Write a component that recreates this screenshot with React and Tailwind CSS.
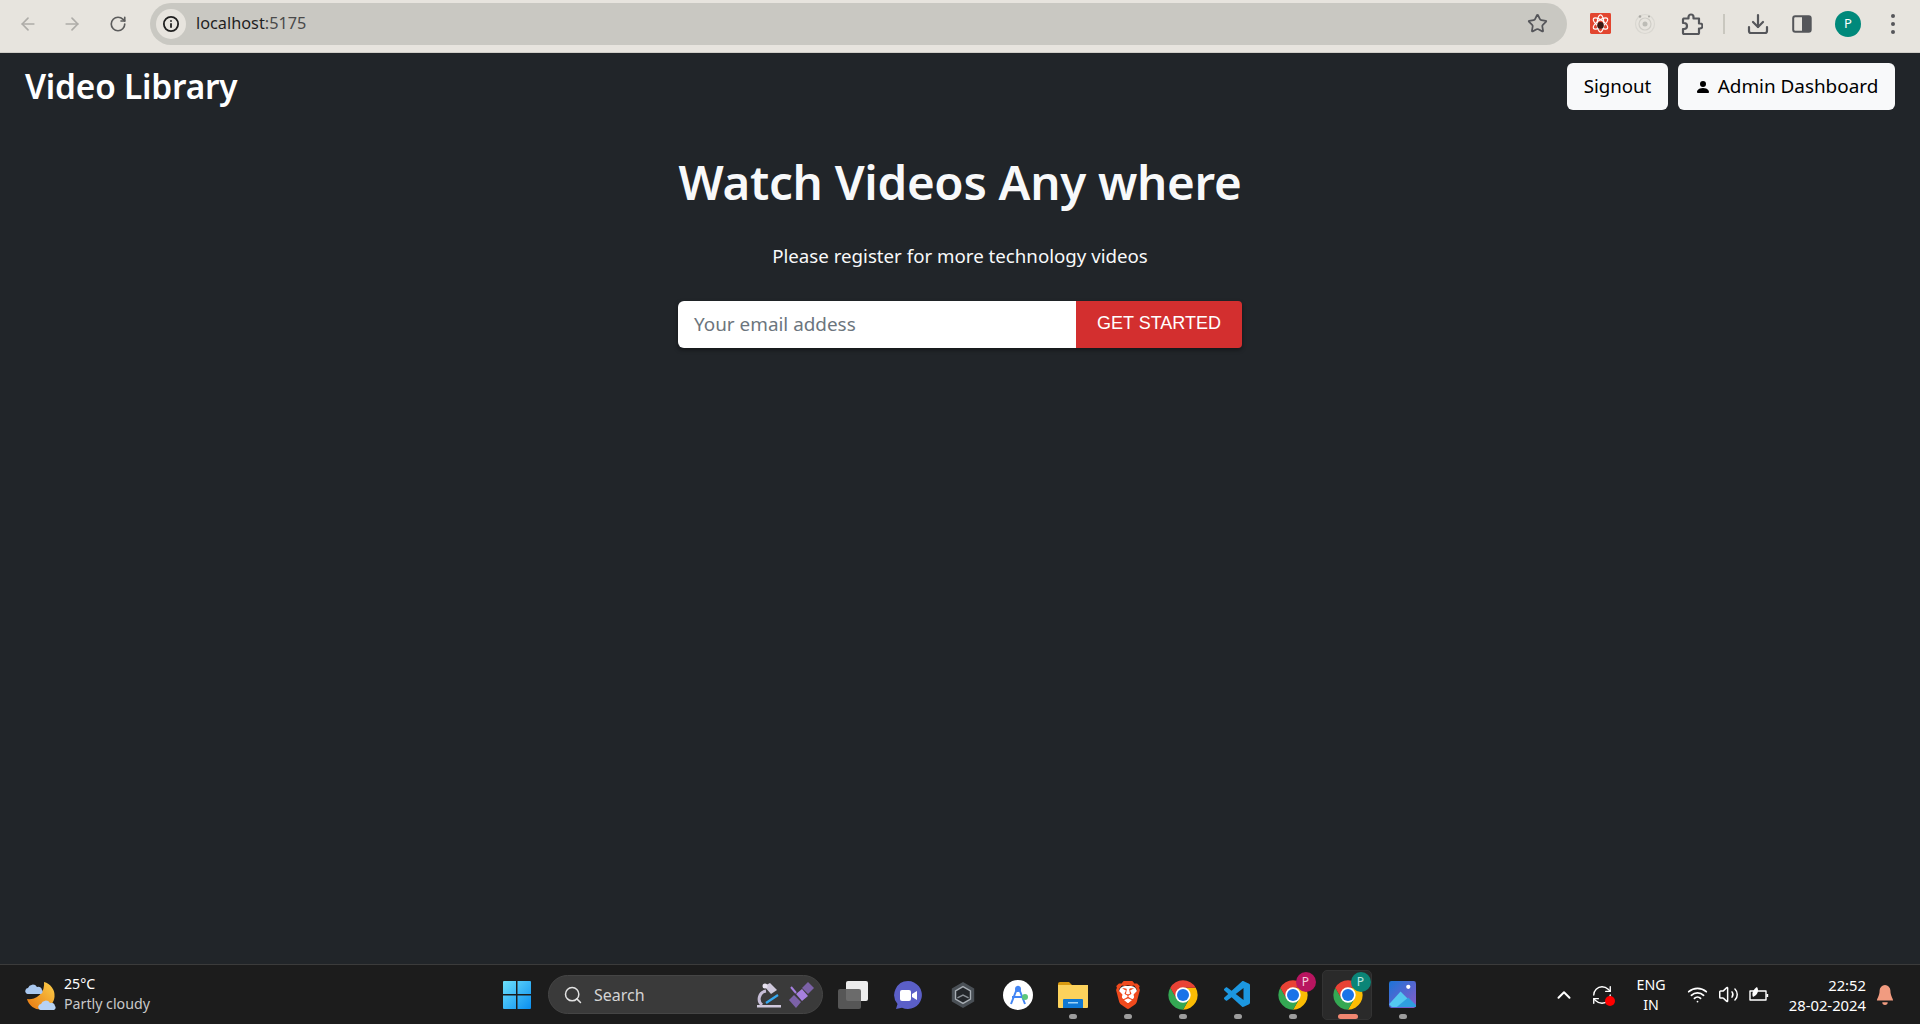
import React from "react";
import { ArrowLeft, ArrowRight, RotateCw, Star, Download, ChevronUp, Wifi, Volume2, Search, RefreshCw } from "lucide-react";
import { SiBrave } from "react-icons/si";
import { VscVscode } from "react-icons/vsc";

const seg = { fontFamily: '"Noto Sans", sans-serif' };

function Chrome({ badge, badgeClass }) {
  return (
    <div className="relative w-[32px] h-[32px]">
      <svg viewBox="0 0 48 48" className="w-[32px] h-[32px]">
        <path d="M43.05 13A22 22 0 0 1 24 46L33.5 29.5L24 13Z" fill="#fbbc04" />
        <path d="M4.95 13A22 22 0 0 0 24 46L33.5 29.5H14.5Z" fill="#34a853" />
        <path d="M4.95 13A22 22 0 0 1 43.05 13H24L14.5 29.5Z" fill="#e94235" />
        <circle cx="24" cy="24" r="11.5" fill="#fff" />
        <circle cx="24" cy="24" r="9" fill="#1a73e8" />
      </svg>
      {badge && (
        <div className={`absolute -top-[7px] -right-[7px] w-[20px] h-[20px] rounded-full flex items-center justify-center text-[12px] ${badgeClass}`}>
          P
        </div>
      )}
    </div>
  );
}

function Slot({ dot, active, children }) {
  return (
    <div className="relative w-[55px] h-[50px] flex items-center justify-center">
      {active && <div className="absolute left-[2px] right-[3px] inset-y-0 rounded-[5px] bg-[#2a2a2a] border border-[#333]" />}
      <div className="relative">{children}</div>
      {dot && <div className={`absolute bottom-[1px] h-[5px] rounded-full ${active ? "w-[20px] bg-[#f08670]" : "w-[8px] bg-[#9d9d9d]"}`} />}
    </div>
  );
}

export default function App() {
  return (
    <div className="w-[1920px] h-[1024px] flex flex-col overflow-hidden bg-[#212529]" style={seg}>
      {/* browser bar */}
      <div className="h-[53px] shrink-0 bg-[#e7e4de] border-b border-[#cfcdc7] flex items-center pl-[16px] pr-[16px]">
        <div className="w-[24px] flex justify-center -mt-[5px]"><ArrowLeft size={20} strokeWidth={2} className="text-[#aeaca8]" /></div>
        <div className="w-[24px] ml-[20px] flex justify-center -mt-[5px]"><ArrowRight size={20} strokeWidth={2} className="text-[#aeaca8]" /></div>
        <div className="w-[24px] ml-[22px] flex justify-center -mt-[5px]"><RotateCw size={18} strokeWidth={2.2} className="text-[#5c5c5c]" /></div>
        <div className="ml-[20px] w-[1417px] h-[42px] -mt-[5px] rounded-full bg-[#c9c8c2] flex items-center pl-[6px] pr-[19px]">
          <div className="w-[30px] h-[30px] rounded-full bg-[#e7e4de] flex items-center justify-center">
            <svg viewBox="0 0 24 24" className="w-[18px] h-[18px]" fill="none" stroke="#1f1f1f" strokeWidth="2.4">
              <circle cx="12" cy="12" r="9.5" />
              <path d="M12 11v6M12 7v2" />
            </svg>
          </div>
          <span className="ml-[10px] text-[16.300px] text-[#4a4a4a]"><span className="text-[#1f1f1f]">localhost</span>:5175</span>
          <Star size={21} strokeWidth={2} className="ml-auto text-[#55565a]" />
        </div>
        <div className="flex items-center -mt-[5px]">
          <svg viewBox="0 0 22 22" className="w-[21px] h-[21px] ml-[23px]">
            <rect width="22" height="22" rx="1.5" fill="#e2452f" />
            <g fill="none" stroke="#fff" strokeWidth="1.2">
              <ellipse cx="11" cy="11" rx="9" ry="3.5" transform="rotate(35 11 11)" />
              <ellipse cx="11" cy="11" rx="9" ry="3.5" transform="rotate(-35 11 11)" />
              <ellipse cx="11" cy="11" rx="3.5" ry="9" />
            </g>
            <circle cx="11" cy="13" r="3.5" fill="#3a1a14" />
          </svg>
          <svg viewBox="0 0 22 22" className="w-[22px] h-[22px] ml-[23px]" fill="none">
            <circle cx="11" cy="11" r="9.5" stroke="#d9d7d1" strokeWidth="1.2" />
            <circle cx="11" cy="11" r="6" stroke="#cfcdc7" strokeWidth="1.2" />
            <circle cx="11" cy="11" r="2.5" fill="#bdbcb6" />
            <circle cx="6" cy="3.5" r="1.3" fill="#a9a8a3" />
            <circle cx="15" cy="3.5" r="1" fill="#a9a8a3" />
          </svg>
          <svg viewBox="0 0 22 22" className="w-[22px] h-[22px] ml-[25px]" fill="none" stroke="#55565a" strokeWidth="2.200" strokeLinejoin="round">
            <path d="M2.500 5.500H7.500V4a2.500 2.500 0 0 1 5 0v1.500h5.500v5h1a2.500 2.500 0 0 1 0 5h-1v4.500a1 1 0 0 1-1 1H3a1 1 0 0 1-1-1v-4h1a3 3 0 0 0 0-6H2v-3.500z" />
          </svg>
          <div className="w-[2px] h-[20px] ml-[20px] bg-[#c9c7bf]" />
          <Download size={24} strokeWidth={2.2} className="ml-[21px] text-[#55565a]" />
          <svg viewBox="0 0 20 20" className="w-[20px] h-[20px] ml-[22px]">
            <rect x="1.200" y="2.200" width="17.500" height="15.500" rx="2" fill="none" stroke="#55565a" strokeWidth="2" />
            <rect x="10" y="2.500" width="8.500" height="15" fill="#55565a" />
          </svg>
          <div className="ml-[23px] w-[26px] h-[26px] rounded-full bg-[#00897b] flex items-center justify-center text-white text-[13px]">P</div>
          <div className="ml-[30px] flex flex-col gap-[4px]">
            <div className="w-[4px] h-[4px] rounded-full bg-[#55565a]" />
            <div className="w-[4px] h-[4px] rounded-full bg-[#55565a]" />
            <div className="w-[4px] h-[4px] rounded-full bg-[#55565a]" />
          </div>
        </div>
      </div>

      {/* page */}
      <div className="flex-1 bg-[#212529] text-[#f8f9fa]">
        <header className="flex justify-between items-start pl-[25px] pr-[25px] pt-[10px]">
          <div className="text-[33.400px] leading-[38px] mt-[4px] font-semibold text-white tracking-[-0.2px]">Video Library</div>
          <div className="flex gap-[10px]">
            <button className="h-[47px] w-[101px] rounded-[6px] bg-[#f8f9fa] text-[#000] text-[18.700px]">Signout</button>
            <button className="h-[47px] w-[217px] rounded-[6px] bg-[#f8f9fa] text-[#000] text-[18.900px] flex items-center justify-center gap-[7px]">
              <svg viewBox="0 0 16 16" className="w-[16px] h-[16px]" fill="currentColor">
                <path d="M3 14s-1 0-1-1 1-4 6-4 6 3 6 4-1 1-1 1zm5-6a3 3 0 1 0 0-6 3 3 0 0 0 0 6" />
              </svg>
              Admin Dashboard
            </button>
          </div>
        </header>
        <main className="flex flex-col items-center pt-[43px]">
          <h1 className="text-[47.500px] leading-[58px] font-semibold tracking-[-0.3px]">Watch Videos Any where</h1>
          <p className="mt-[30px] text-[18.700px] leading-[30px]">Please register for more technology videos</p>
          <div className="mt-[30px] flex w-[564px] h-[47px] rounded-[4px] overflow-hidden shadow-[0_2px_4px_rgba(0,0,0,0.4)]">
            <div className="w-[398px] bg-white rounded-l-[6px] pl-[16px] flex items-center text-[18.900px] text-[#6c757d]">Your email addess</div>
            <button className="flex-1 bg-[#d32f2f] text-white text-[18px] pb-[2px]" style={{ fontFamily: '"Liberation Sans", sans-serif' }}>GET STARTED</button>
          </div>
        </main>
      </div>

      {/* taskbar */}
      <div className="h-[60px] shrink-0 bg-[#1c1c1c] border-t border-[#3b3b3b] relative flex items-center text-white">
        <div className="flex items-center pl-[24px] w-[485px]">
          <svg viewBox="0 0 32 32" className="w-[32px] h-[32px]">
            <defs>
              <linearGradient id="m" x1="1" y1="0" x2="0" y2="1">
                <stop offset="0" stopColor="#fcd04a" />
                <stop offset="1" stopColor="#e8760f" />
              </linearGradient>
            </defs>
            <path d="M20 3A14 14 0 1 1 3 20A15 15 0 0 0 20 3Z" fill="url(#m)" />
            <path d="M2 14a3 3 0 0 1 2-5a5 5 0 0 1 9-1a3.500 3.500 0 0 1 5 3a2.500 2.500 0 0 1-1 4H4a2 2 0 0 1-2-1z" fill="#a9c8f0" />
            <path d="M15 30a3 3 0 0 1 2-5a5 5 0 0 1 9-1a3.500 3.500 0 0 1 5 3a2.500 2.500 0 0 1-1 4H17a2 2 0 0 1-2-1z" fill="#b7d2f3" />
          </svg>
          <div className="ml-[8px] flex flex-col -mt-[1px]">
            <span className="text-[14.200px] leading-[19px]">25°C</span>
            <span className="text-[14.200px] leading-[21px] text-[#c9c9c9]">Partly cloudy</span>
          </div>
        </div>

        <div className="w-[63px] flex justify-center">
          <svg viewBox="0 0 30 30" className="w-[30px] h-[30px]">
            <defs>
              <linearGradient id="w" x1="0" y1="0" x2="1" y2="1">
                <stop offset="0" stopColor="#6ce0fb" />
                <stop offset="1" stopColor="#0a8ef0" />
              </linearGradient>
            </defs>
            <path d="M1 2a1 1 0 0 1 1-1h12v13H1zM15.500 1H28a1 1 0 0 1 1 1v12H15.500zM1 15.500h13V29H2a1 1 0 0 1-1-1zM15.500 15.500H29V28a1 1 0 0 1-1 1H15.500z" fill="url(#w)" />
          </svg>
        </div>
        <div className="w-[275px] h-[39px] rounded-full bg-[#3a3a3a] border border-[#454545] flex items-center pl-[14px] pr-[8px]">
          <Search size={20} strokeWidth={1.800} className="text-[#e2e2e2]" />
          <span className="ml-[11px] text-[16px] text-[#d4d4d4]">Search</span>
          <svg viewBox="0 0 26 26" className="ml-auto w-[26px] h-[26px]">
            <path d="M1 23h24v2.500H1z" fill="#cfc8dc" />
            <path d="M6 23a8 8 0 0 1 4-14" fill="none" stroke="#c6bdd6" strokeWidth="3" />
            <path d="M8 4l6-3 7 7-6 4z" fill="#cfc8dc" />
            <circle cx="9" cy="4" r="2.500" fill="#e7e2f0" />
            <path d="M10 21l12-8" stroke="#37a9f0" strokeWidth="2.200" />
          </svg>
          <svg viewBox="0 0 26 26" className="ml-[6px] w-[26px] h-[26px]">
            <path d="M8 12l6-5 6 7-6 5z" fill="#a680df" />
            <path d="M14 6l6-6 6 6-6 6z" fill="#7c62a8" />
            <path d="M1 18l5-5 7 7-5 6z" fill="#7c62a8" />
            <path d="M3 5l5 6" stroke="#a680df" strokeWidth="2" />
          </svg>
        </div>

        <div className="flex items-center ml-[2px]">
          <Slot>
            <div className="relative w-[30px] h-[28px]">
              <div className="absolute right-0 top-0 w-[22px] h-[20px] bg-[#ececec] rounded-[2px]" />
              <div className="absolute left-0 bottom-0 w-[23px] h-[20px] bg-[#5d5d5d] rounded-[2px] opacity-90" />
            </div>
          </Slot>
          <Slot>
            <svg viewBox="0 0 30 30" className="w-[30px] h-[30px]">
              <path d="M15 1a14 14 0 1 1-6 26.700L3 29l1.500-5A14 14 0 0 1 15 1z" fill="#5b5fc7" />
              <rect x="7" y="10" width="11" height="11" rx="2" fill="#fff" />
              <path d="M19 14l5-3v9l-5-3z" fill="#fff" />
            </svg>
          </Slot>
          <Slot>
            <svg viewBox="0 0 30 30" className="w-[28px] h-[28px]">
              <path d="M15 1l12 7v14l-12 7-12-7V8z" fill="#4a5056" />
              <path d="M15 6l8 4.500v9L15 24l-8-4.500v-9z" fill="#23262a" stroke="#a8aeb4" strokeWidth="1.500" />
              <path d="M9 18l6-3 6 3" fill="none" stroke="#8b9197" strokeWidth="1.500" />
            </svg>
          </Slot>
          <Slot>
            <div className="w-[30px] h-[30px] rounded-full bg-white flex items-center justify-center">
              <svg viewBox="0 0 24 24" className="w-[24px] h-[24px]" fill="none" stroke="#4285f4" strokeWidth="2">
                <path d="M12 3L5 21M12 3l7 18M6 14h12" />
                <circle cx="12" cy="6" r="2" fill="#4285f4" />
                <circle cx="19" cy="14" r="3" fill="#5cc77b" stroke="none" />
              </svg>
            </div>
          </Slot>
          <Slot dot>
            <svg viewBox="0 0 30 28" className="w-[30px] h-[28px]">
              <path d="M0 3a2 2 0 0 1 2-2h9l3 3h-14z" fill="#d99a10" />
              <path d="M0 4h30v22a1 1 0 0 1-1 1H1a1 1 0 0 1-1-1z" fill="#fcd25c" />
              <path d="M5 19a1 1 0 0 1 1-1h18a1 1 0 0 1 1 1v8H5z" fill="#0f78d4" />
              <rect x="10" y="21" width="10" height="1.500" fill="#9fd3f7" />
            </svg>
          </Slot>
          <Slot dot>
            <div className="relative">
              <div className="absolute left-[5px] right-[5px] top-[5px] bottom-[6px] bg-white rounded-[6px]" />
              <SiBrave size={28} className="relative text-[#f04a1d]" />
            </div>
          </Slot>
          <Slot dot><Chrome /></Slot>
          <Slot dot><VscVscode size={32} className="text-[#1c97e0]" /></Slot>
          <Slot dot><Chrome badge badgeClass="bg-[#b81560] text-[#f4cddd]" /></Slot>
          <Slot dot active><Chrome badge badgeClass="bg-[#0b8577] text-[#bfe8e0]" /></Slot>
          <Slot dot>
            <svg viewBox="0 0 28 28" className="w-[27px] h-[27px]">
              <defs>
                <linearGradient id="p" x1="0" y1="0" x2="1" y2="1">
                  <stop offset="0" stopColor="#1b74d8" />
                  <stop offset="1" stopColor="#8a5bc8" />
                </linearGradient>
              </defs>
              <rect width="28" height="28" rx="2.500" fill="url(#p)" />
              <circle cx="20" cy="6" r="2.200" fill="#fff" />
              <path d="M0 24l12-13 16 16H3z" fill="#53c8ef" />
              <path d="M8 27l12-10 8 8v1a1 1 0 0 1-1 1z" fill="#2f9fe0" />
            </svg>
          </Slot>
        </div>

        <div className="ml-auto flex items-center h-full">
          <ChevronUp size={22} strokeWidth={2.2} className="text-white" />
          <div className="relative ml-[16px] w-[22px] h-[22px]">
            <RefreshCw size={22} strokeWidth={1.500} className="text-white" />
            <div className="absolute right-[-2px] bottom-[0px] w-[10px] h-[10px] rounded-full bg-[#ff0000]" />
          </div>
          <div className="ml-[14px] w-[48px] flex flex-col items-center text-[14.200px] leading-[20px]">
            <span>ENG</span>
            <span>IN</span>
          </div>
          <Wifi size={21} strokeWidth={2} className="ml-[12px]" />
          <Volume2 size={21} strokeWidth={1.700} className="ml-[10px]" />
          <svg viewBox="0 0 22 18" className="ml-[9px] w-[22px] h-[18px]" fill="none" stroke="#fff" strokeWidth="1.400" strokeLinejoin="round">
            <path d="M2 5h16v9H2zM19.500 8v3" />
            <path d="M5 11c-2-4 1-8 4-10 2 3 1 8-4 10z" fill="#fff" stroke="none" />
          </svg>
          <div className="ml-[16px] w-[80px] flex flex-col items-end text-[14.800px] leading-[20px]">
            <span>22:52</span>
            <span className="whitespace-nowrap">28-02-2024</span>
          </div>
          <svg viewBox="0 0 20 24" className="ml-[10px] mr-[26px] w-[18px] h-[22px]" fill="#f19b80">
            <path d="M10 1a6 6 0 0 1 6 6c0 6 3 9 3 11H1c0-2 3-5 3-11a6 6 0 0 1 6-6z" />
            <path d="M7 20h6a3 3 0 0 1-6 0z" />
          </svg>
        </div>
      </div>
    </div>
  );
}
